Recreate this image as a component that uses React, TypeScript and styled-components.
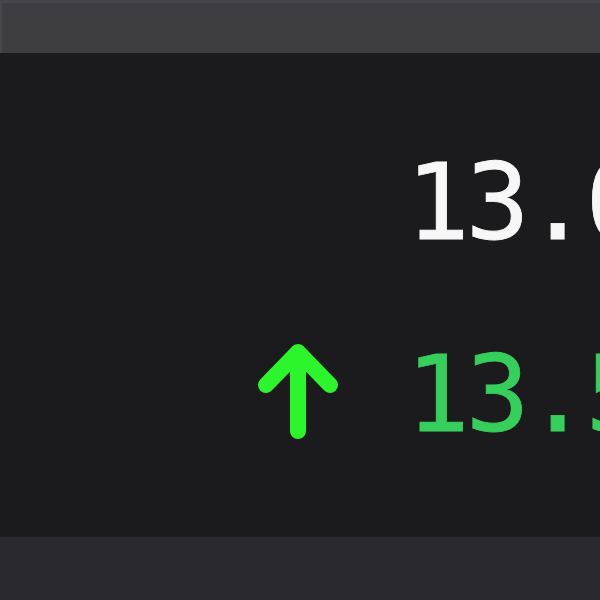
import React from "react";
import styled, { createGlobalStyle } from "styled-components";

const Global = createGlobalStyle`
  html, body { margin: 0; padding: 0; background: #1b1b1e; overflow: hidden; }
  #root { width: 600px; height: 600px; }
`;

const Screen = styled.div`
  width: 600px;
  height: 600px;
  display: flex;
  flex-direction: column;
  background: #1b1b1e;
  overflow: hidden;
`;

const TopBar = styled.div`
  height: 50px;
  flex: none;
  background: #3e3d42;
  border-top: 3px solid #47464c;
  box-shadow: inset 2px 0 0 #47464c;
`;

const Main = styled.div`
  flex: 1;
  display: flex;
  flex-direction: column;
  padding-top: 89px;
  gap: 70px;
`;

const Row = styled.div`
  display: grid;
  grid-template-columns: 413px auto;
  align-items: center;
  height: 122px;
`;

const IconCell = styled.div`
  justify-self: end;
  padding-right: 74px;
  display: flex;
  align-items: center;
  margin-top: -8px;
`;

const Value = styled.span<{ $tone: "white" | "green" }>`
  font-family: "DejaVu Sans Mono", monospace;
  font-size: 106px;
  line-height: 1;
  letter-spacing: -4px;
  white-space: nowrap;
  margin-left: -7px;
  -webkit-text-stroke: 0.8px currentColor;
  color: ${(p) => (p.$tone === "green" ? "#36cf5b" : "#f7f7f7")};
`;

const BottomBar = styled.div`
  height: 63px;
  flex: none;
  background: #2a2930;
`;

const UpArrow = () => (
  <svg width="82" height="100" viewBox="0 0 82 100" fill="none">
    <path
      d="M41 11 L41 90 M9 44 L41 11 L73 44"
      stroke="#2cf52c"
      strokeWidth="16"
      strokeLinecap="round"
      strokeLinejoin="round"
    />
  </svg>
);

export default function App() {
  return (
    <>
      <Global />
      <Screen>
        <TopBar />
        <Main>
          <Row>
            <div />
            <Value $tone="white">13.00</Value>
          </Row>
          <Row>
            <IconCell>
              <UpArrow />
            </IconCell>
            <Value $tone="green">13.50</Value>
          </Row>
        </Main>
        <BottomBar />
      </Screen>
    </>
  );
}
